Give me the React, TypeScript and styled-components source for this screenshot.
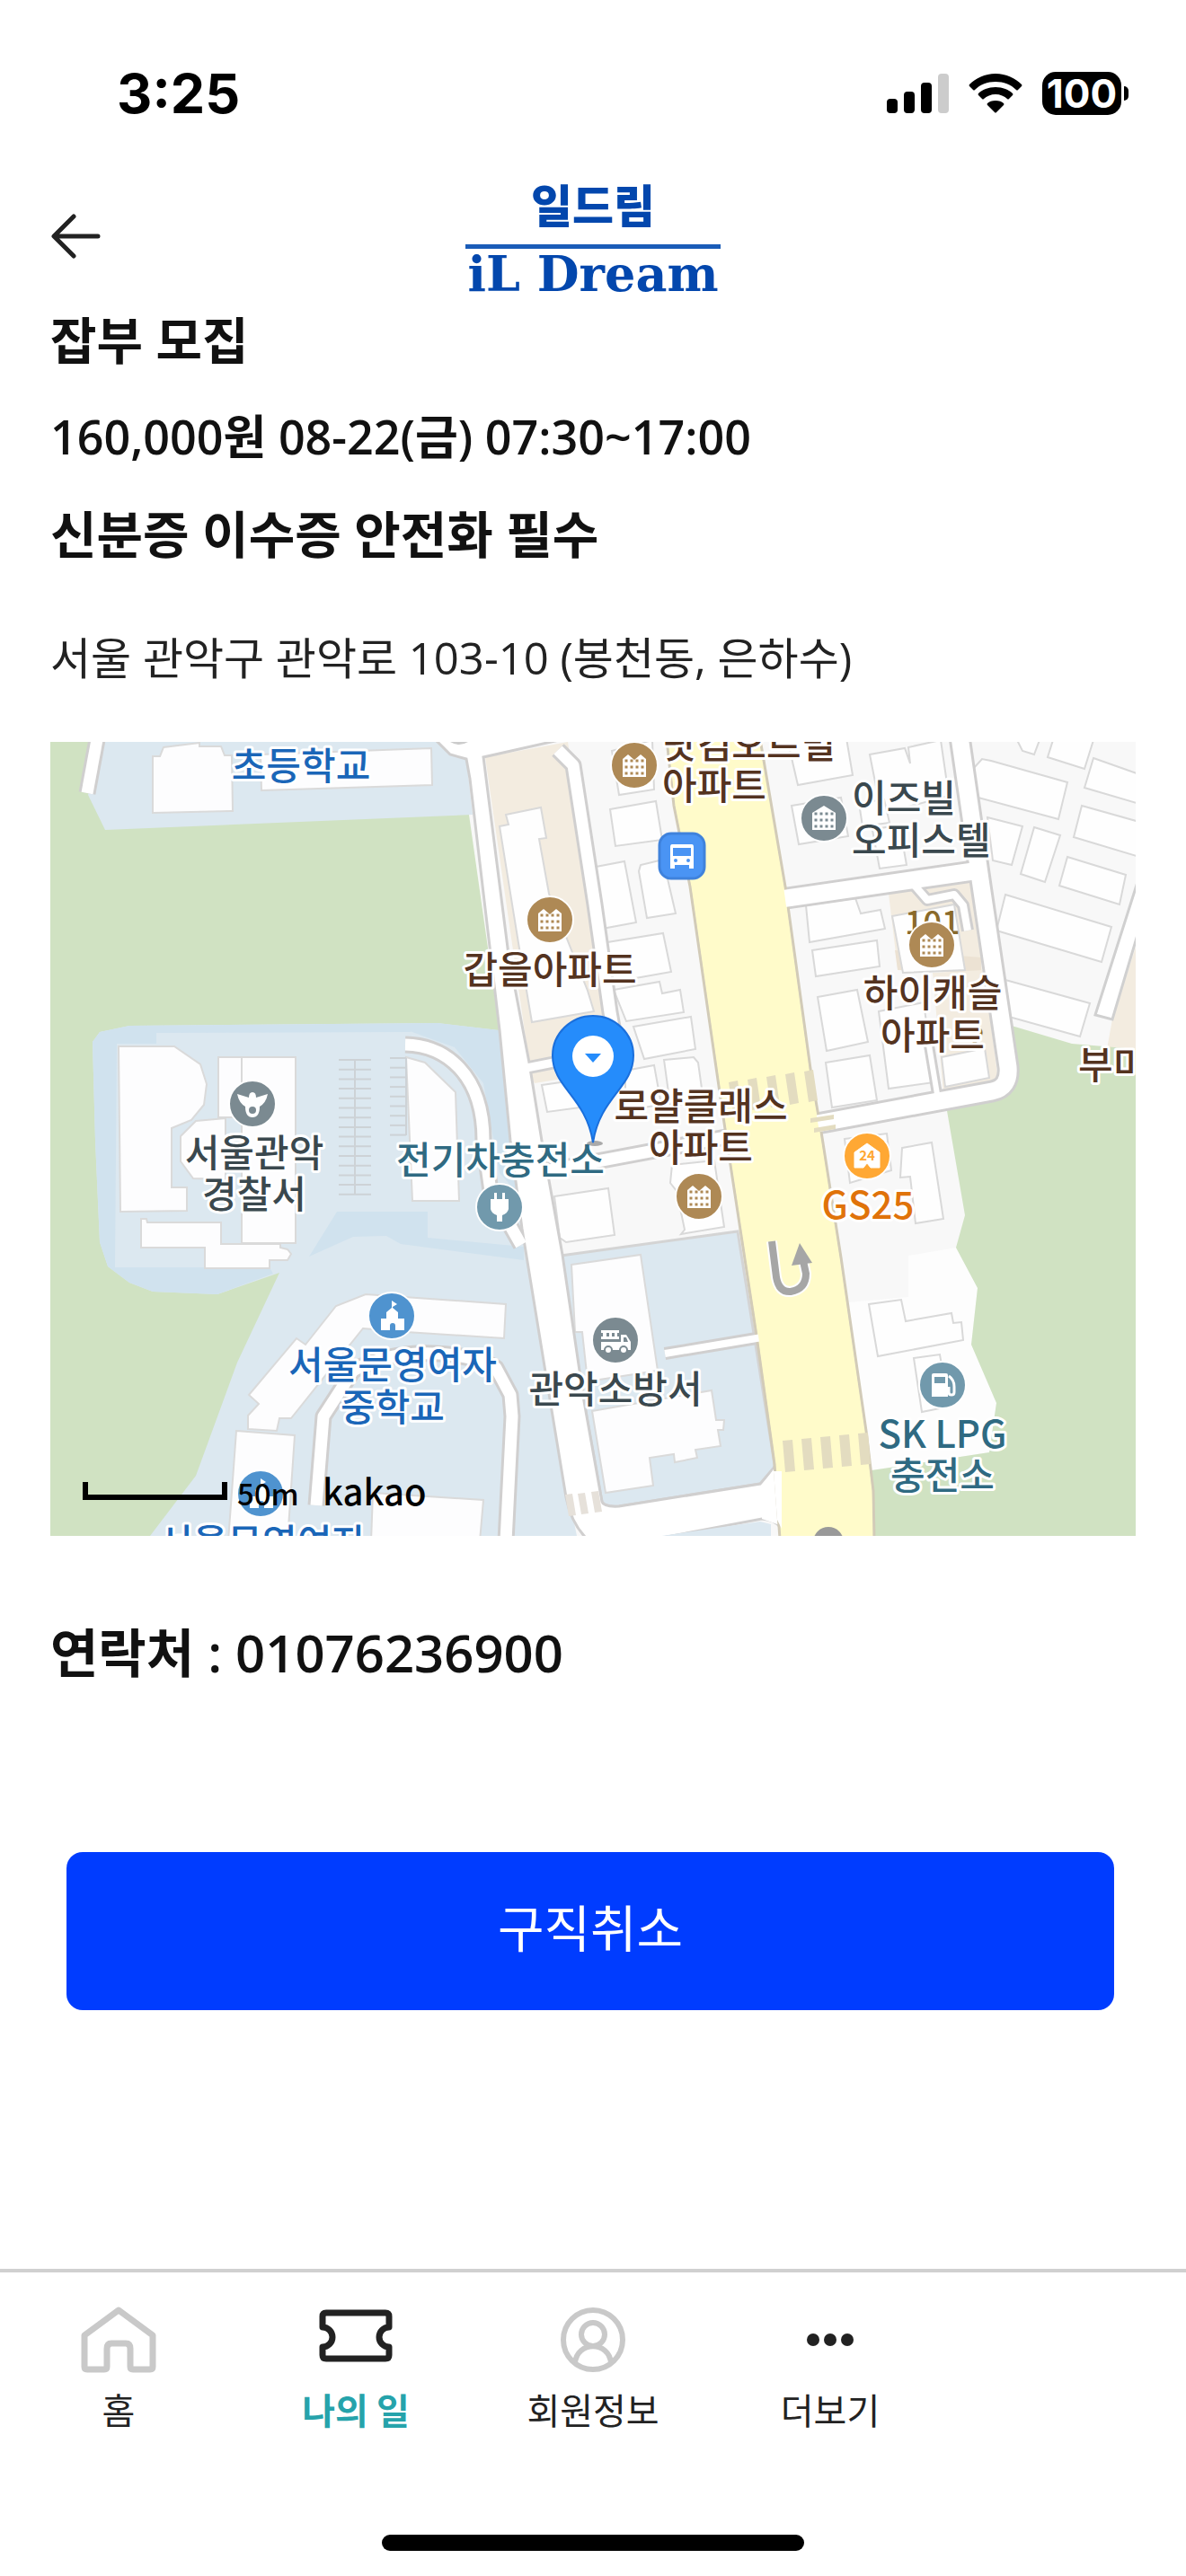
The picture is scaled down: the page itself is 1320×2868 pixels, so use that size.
import React from 'react';
import styled, { createGlobalStyle } from 'styled-components';

const GlobalStyle = createGlobalStyle`
  *, *::before, *::after { box-sizing: border-box; }
  body {
    margin: 0;
    background: #fff;
    color: #111;
    font-family: "Open Sans", "Noto Sans CJK KR", sans-serif;
  }
`;

const Page = styled.div`
  min-height: 100vh;
  display: flex;
  flex-direction: column;
  background: #fff;
`;

/* ---------- status bar ---------- */

const StatusBar = styled.div`
  display: flex;
  align-items: center;
  justify-content: space-between;
  height: 192px;
  padding: 16px 64px 0 130px;
`;

const Clock = styled.time`
  font: 700 61px/72px Inter, sans-serif;
  color: #000;
`;

const StatusIcons = styled.div`
  display: flex;
  align-items: center;
  gap: 22px;
`;

const BatteryBox = styled.div`
  display: flex;
  align-items: center;
  gap: 3px;
`;

const BatteryLevel = styled.span`
  display: flex;
  align-items: center;
  justify-content: center;
  width: 88px;
  height: 48px;
  border-radius: 15px;
  background: #000;
  color: #fff;
  font: 700 44px/48px Inter, sans-serif;
`;

const BatteryTip = styled.span`
  width: 5px;
  height: 16px;
  border-radius: 0 6px 6px 0;
  background: #000;
`;

/* ---------- header ---------- */

const Header = styled.header`
  display: grid;
  grid-template-columns: 1fr auto 1fr;
  align-items: center;
  height: 132px;
  padding: 0 56px;
`;

const BackButton = styled.button`
  justify-self: start;
  display: flex;
  padding: 0;
  border: 0;
  background: none;
  cursor: pointer;
`;

const Logo = styled.div`
  display: flex;
  flex-direction: column;
  align-items: center;
  gap: 12px;
  color: #0347ad;
`;

const LogoKorean = styled.span`
  font: 900 50px/68px "Noto Sans CJK KR", sans-serif;
`;

const LogoLatin = styled.span`
  padding: 0 2px;
  border-top: 5px solid #1a5cb8;
  font: 700 54px/56px "DejaVu Serif", serif;
`;

/* ---------- posting ---------- */

const Main = styled.main`
  flex: 1;
  padding: 0 56px;
`;

const Title = styled.h1`
  margin: 0;
  font-size: 56px;
  line-height: 108px;
  font-weight: 700;
`;

const PayLine = styled.p`
  margin: 0;
  font-size: 52px;
  line-height: 108px;
  font-weight: 600;
`;

const Requirement = styled(Title).attrs({ as: 'h2' })``;

const Address = styled.p`
  margin: 30px 0 40px;
  font-size: 49px;
  line-height: 108px;
  color: #222;
`;

const MapBox = styled.figure`
  margin: 0;
  overflow: hidden;

  svg {
    display: block;
    width: 100%;
    height: auto;
  }

  text {
    font-family: "Noto Sans CJK KR", sans-serif;
    font-size: 42px;
    font-weight: 500;
  }
`;

const Contact = styled.p`
  margin: 76px 0 168px;
  font-size: 58px;
  line-height: 108px;
  font-weight: 600;
`;

const CancelButton = styled.button`
  display: block;
  width: calc(100% - 42px);
  height: 176px;
  margin: 0 24px 48px 18px;
  padding: 0 0 12px;
  border: 0;
  border-radius: 18px;
  background: #003cff;
  color: #fff;
  font: 400 56px/80px "Noto Sans CJK KR", sans-serif;
  cursor: pointer;
`;

/* ---------- bottom navigation ---------- */

const TabBar = styled.nav`
  display: grid;
  grid-template-columns: repeat(5, 1fr);
  border-top: 4px solid #d0d0d0;
  padding-top: 38px;
`;

const Tab = styled.a<{ $active?: boolean }>`
  display: flex;
  flex-direction: column;
  align-items: center;
  gap: 8px;
  color: ${(p) => (p.$active ? '#26a3ab' : '#222')};
  font: ${(p) => (p.$active ? 700 : 400)} 40px/60px "Noto Sans CJK KR", sans-serif;
  text-decoration: none;
  white-space: nowrap;

  svg { display: block; }
`;

const HomeIndicator = styled.div`
  width: 470px;
  height: 18px;
  margin: 110px auto 28px;
  border-radius: 9px;
  background: #000;
`;

/* ---------- map drawing ---------- */

const ROADS: { d: string; w: number }[] = [
  { d: 'M53 -8L41 57', w: 13 },
  { d: 'M565 9L582 26L606 181L623 301L632 350', w: 13 },
  { d: 'M530 363L640 341', w: 9 },
  { d: 'M550 478L752 440', w: 13 },
  { d: 'M1012 -6L1036 160L1066 362Q1068 385 1048 389L848 426', w: 19 },
  { d: 'M806 176L1034 143', w: 19 },
  { d: 'M962 160L976 176L1006 170L1016 182L1021 210', w: 8 },
  { d: 'M975 320L988 398', w: 6 },
  { d: 'M395 337C440 338 482 370 482 444L490 500L524 560', w: 13 },
  { d: 'M296 850L304 751L337 700C390 670 470 680 496 697L512 727L514 751L507 890', w: 13 },
  { d: 'M684 681L792 663', w: 8 },
];

const PALE_BUILDINGS = [
  '114,16 122,16 126,6 166,1 166,5 190,5 194,15 202,15 203,77 114,79',
  '234,14 424,7 425,48 235,54',
  '76,339 138,339 167,359 174,381 171,404 157,421 135,430 135,496 152,496 152,522 78,523',
  '187,351 273,351 273,558 213,558 213,418 187,418',
  '145,439 162,422 195,419 195,487 159,486 145,467',
  '101,531 107,531 108,535 190,535 190,559 256,559 256,563 264,565 268,570 264,577 244,577 244,586 172,586 172,563 101,563',
  '396,351 417,357 451,390 455,511 403,511',
  '351,615 507,626 505,664 396,657 348,653 268,753 255,753 252,767 220,765 220,750 232,737 221,727 274,664 284,671 318,628',
  '207,767 272,772 264,890 198,890',
  '359,836 482,844 478,890 357,890',
  '580,582 657,571 676,700 598,712 592,657 584,657',
  '603,745 736,722 741,755 750,755 749,766 743,766 746,784 718,788 720,797 695,802 694,793 667,797 671,828 618,836',
];

const BUILDINGS = [
  '500,94 510,92 507,81 546,73 552,107 544,108 555,169 598,277 605,300 536,312 521,224',
  '625,10 670,-2 672,53 633,59',
  '623,75 674,66 681,109 629,116',
  '602,140 639,133 652,201 614,208',
  '655,144 657,137 682,131 696,191 664,196',
  '614,224 682,213 691,256 623,268',
  '627,276 678,267 681,280 701,276 705,301 641,311',
  '649,317 713,306 718,342 661,353',
  '640,366 672,360 680,404 640,410',
  '683,354 716,351 721,357 727,400 690,405',
  '547,382 582,377 590,407 553,412',
  '561,506 621,497 628,549 574,557 567,552',
  '692,471 739,466 750,540 702,548 706,543 697,500 690,491',
  '820,-4 886,-4 893,37 832,48',
  '912,14 951,7 957,24 955,6 991,-2 1000,60 925,80',
  '825,71 880,62 888,105 833,114',
  '900,68 928,64 934,90 904,94',
  '915,98 945,92 953,137 923,141',
  '841,182 896,174 902,191 924,187 929,208 845,223',
  '848,232 920,221 923,250 852,261',
  '854,284 898,276 910,334 864,344',
  '863,357 912,349 920,399 870,407',
  '922,300 972,290 984,379 933,386',
  '937,194 1006,181 1018,254 949,257',
  '992,351 1040,341 1045,374 996,384',
  '1027,30 1037,19 1047,21 1132,45 1122,86 1029,61',
  '1043,84 1082,94 1070,137 1049,132',
  '1095,95 1124,104 1107,156 1080,147',
  '1076,-2 1101,-2 1095,14 1082,10',
  '1116,-2 1161,-2 1151,30 1110,17',
  '1161,18 1212,36 1212,69 1151,51',
  '1148,71 1212,89 1212,128 1139,106',
  '1132,128 1197,148 1190,181 1123,160',
  '1063,170 1181,206 1170,245 1053,210',
  '1063,265 1157,291 1146,328 1067,306',
  '948,452 981,446 994,531 963,536 957,484 946,485',
  '911,626 947,621 952,645 1003,636 1005,647 1014,646 1016,666 921,684',
  '961,686 990,682 1000,740 970,746',
  '884,442 931,436 936,477 890,491',
];

type LabelData = { x: number; y: number; t: string; c: string; start?: boolean };

const BLUE = '#1a66b8';
const BROWN = '#54331f';
const SLATE = '#3a484e';
const TEAL = '#2f6a82';

const LABELS: LabelData[] = [
  { x: 279, y: 42, t: '초등학교', c: BLUE },
  { x: 681, y: 18, t: '닷컴오르빌', c: BROWN, start: true },
  { x: 681, y: 64, t: '아파트', c: BROWN, start: true },
  { x: 892, y: 78, t: '이즈빌', c: SLATE, start: true },
  { x: 892, y: 125, t: '오피스텔', c: SLATE, start: true },
  { x: 556, y: 269, t: '갑을아파트', c: BROWN },
  { x: 982, y: 295, t: '하이캐슬', c: BROWN },
  { x: 982, y: 342, t: '아파트', c: BROWN },
  { x: 1144, y: 375, t: '부미', c: BROWN, start: true },
  { x: 724, y: 421, t: '로얄클래스', c: BROWN },
  { x: 724, y: 467, t: '아파트', c: BROWN },
  { x: 227, y: 473, t: '서울관악', c: SLATE },
  { x: 227, y: 519, t: '경찰서', c: SLATE },
  { x: 501, y: 481, t: '전기차충전소', c: TEAL },
  { x: 910, y: 531, t: 'GS25', c: '#e0730a' },
  { x: 381, y: 709, t: '서울문영여자', c: BLUE },
  { x: 381, y: 756, t: '중학교', c: BLUE },
  { x: 629, y: 736, t: '관악소방서', c: SLATE },
  { x: 993, y: 786, t: 'SK LPG', c: TEAL },
  { x: 993, y: 832, t: '충전소', c: TEAL },
  { x: 236, y: 907, t: '서울문영여자', c: BLUE },
];

const Spot = ({ x, y, fill, children }: { x: number; y: number; fill: string; children: React.ReactNode }) => (
  <g transform={`translate(${x} ${y})`}>
    <circle r="26" fill={fill} stroke="#fff" strokeWidth="2" />
    {children}
  </g>
);

const windows = [-7, 0, 7].flatMap((y) => [-9, -3, 3, 9].map((x) => [x, y]));

const Apartment = ({ x, y, fill = '#ae8955', single }: { x: number; y: number; fill?: string; single?: boolean }) => (
  <Spot x={x} y={y} fill={fill}>
    <path d={single ? 'M-13 13V-6L0 -14L13 -6V13Z' : 'M-13 13V-7L-7 -12L0 -6L7 -12L13 -7V13Z'} fill="#fff" />
    {windows.map(([wx, wy]) => (
      <rect key={`${wx},${wy}`} x={wx - 1.5} y={wy + 0.5} width="3" height="3" fill={fill} />
    ))}
  </Spot>
);

const School = ({ x, y }: { x: number; y: number }) => (
  <Spot x={x} y={y} fill="#4f93cf">
    <path d="M-12 16V3H-6V-4L0 -9V-17L6 -13L1 -10V-9L7 -4V3H14V16H4V11A3 3 0 0 0 -2 11V16Z" fill="#fff" />
  </Spot>
);

const LocationMap = () => (
  <svg viewBox="0 0 1208 884" role="img" aria-label="근무지 지도">
    <rect width="1208" height="884" fill="#f8f8f8" />
    <path d="M0 0H70L463 60L500 321L560 884H0Z" fill="#d0e2c2" />
    <path d="M61 0L42 59L61 98L470 81L461 0Z" fill="#dce8f0" />
    <path d="M47 334L55 323L88 316L431 313L499 321L512 444L525 542L558 744L586 884H111L162 817L208 691L255 591L186 615L114 612L88 602L64 584L55 557L50 444Z" fill="#dce8f0" />
    <path d="M47 334L55 323L88 316L431 313L400 323L118 324V336H74L72 585H244L248 592L186 615L114 612L88 602L64 584L55 557L50 444ZM400 322L431 313L499 321L512 444L518 500L500 480L482 380L450 340ZM319 523H420V552L527 562V577L390 559L374 550L337 551L288 573Z" fill="#d0e2ee" />

    <path d="M484 17L576 0L606 194L618 301L628 345L533 357Z" fill="#f3ece0" />
    <path d="M533 369L600 357V370L539 380Z" fill="#f3ece0" />
    <path d="M933 169L1027 156L1037 254L943 252Z" fill="#f3ece0" />
    <path d="M940 232L1036 240V257L943 254Z" fill="#ece2d3" />
    <path d="M982 257L1039 254L1055 377L994 391Z" fill="#f3ece0" />
    <path d="M1212 216L1182 309L1176 342L1212 344Z" fill="#f3ece0" />

    <path d="M955 572L1008 563L1032 608L1025 671L1053 736L1045 791L914 811L888 624L955 618Z" fill="#fdfdfd" />
    <path d="M1070 316L1137 336L1208 342V884H917L914 811L1045 791L1053 736L1025 671L1032 608L1008 563L1018 527L997 405L1060 390Z" fill="#d0e2c2" />

    <path d="M568 572L765 545L806 804Q806 822 790 826L633 851Q618 852 614 846L594 734Z" fill="#dce8f0" stroke="#d4d4d4" strokeWidth="3" />

    <g fill="#fdfdfe" stroke="#dadada" strokeWidth="2">
      {PALE_BUILDINGS.map((p) => <polygon key={p} points={p} />)}
      <path d="M213 351V418" />
    </g>
    <g fill="#fefefe" stroke="#d9d9d9" strokeWidth="2">
      {BUILDINGS.map((p) => <polygon key={p} points={p} />)}
    </g>

    <g stroke="#cdd2d6" strokeWidth="2">
      <path d="M339 354V504M396 352V438" />
      {Array.from({ length: 15 }, (_, i) => (
        <path key={i} d={`M321 ${354 + i * 10.7}H357`} />
      ))}
      {Array.from({ length: 9 }, (_, i) => (
        <path key={i} d={`M378 ${352 + i * 10.7}H396`} />
      ))}
    </g>

    <path d="M1212 150L1163 304L1182 309L1212 208" fill="#fff" stroke="#d0d0d0" strokeWidth="3" />

    <g fill="none" stroke="#d0cfcf" strokeLinejoin="round">
      {ROADS.map((r) => <path key={r.d} d={r.d} strokeWidth={r.w + 6} />)}
    </g>
    <path d="M427 -4L445 14L463 19L467 41L500 321L512 444L525 542L558 744L574 841Q580 872 600 890H660L792 865Q806 866 812 874V800L790 826L633 851Q616 852 614 846L594 734L570 571L547 444L533 357L510 237L482 17L575 -4Z" fill="#fff" stroke="#d0cfcf" strokeWidth="3" />
    <path d="M792 828L812 800V872L792 865Z" fill="#fff" />
    <path d="M667 886L790 868L802 871V886Z" fill="#dce8f0" />
    <path d="M445 0Q455 6 465 0Z" fill="#ccc" />

    <path d="M686 -3L694 71L712 161L747 404L757 471L786 661L806 804L812 887H917L916 834L908 767L880 574L858 434L847 371L818 161L790 -3Z" fill="#fffbca" stroke="#d2cbb8" strokeWidth="3" />
    <g fill="none" stroke="#fff" strokeLinejoin="round">
      {ROADS.map((r) => <path key={r.d} d={r.d} strokeWidth={r.w} />)}
    </g>
    <path d="M688 0L696 71L714 161L749 404L759 471L788 661L808 804L814 884H915L914 834L906 767L878 574L856 434L845 371L816 161L788 0Z" fill="#fffbca" />
    <path d="M805 812L809 866L814 876V812Z" fill="#fff" />

    <g fill="#e3dcc0">
      {[0, 1, 2, 3, 4].map((i) => (
        <path key={i} d={`M${755 + i * 21} ${379 - i * 3}l10 -2l5 34l-10 2Z`} />
      ))}
      {[0, 1, 2, 3, 4].map((i) => (
        <path key={i} d={`M${815 + i * 21} ${778 - i * 2}l11 -1l3 35l-11 1Z`} />
      ))}
      <path d="M846 419l26 -4v5l-26 4ZM850 430l24 -4v5l-24 4Z" />
    </g>
    <g fill="#e6e1da">
      <path d="M573 838l8 -1l4 24l-8 1ZM587 837l8 -1l4 23l-8 1ZM602 835l8 -1l4 23l-8 1Z" />
    </g>

    <path d="M803 556L808 596Q811 613 824 612Q841 609 841 592L838 578" fill="none" stroke="#fff" strokeWidth="12" />
    <path d="M803 556L808 596Q811 613 824 612Q841 609 841 592L838 578" fill="none" stroke="#a6a6a6" strokeWidth="8" />
    <path d="M834 558L848 580L825 583Z" fill="#a6a6a6" />
    <circle cx="866" cy="891" r="17" fill="#999" />

    <text x="951" y="214" fill="#8a6a2a" style={{ fontSize: 36 }}>101</text>
    <text x="1022" y="340" fill="#8a6a2a" style={{ fontSize: 32 }}>2</text>

    {LABELS.map((l) => (
      <text
        key={`${l.x},${l.y}`}
        x={l.x}
        y={l.y}
        fill={l.c}
        textAnchor={l.start ? 'start' : 'middle'}
        stroke="#fff"
        strokeWidth="6"
        strokeLinejoin="round"
        paintOrder="stroke"
      >
        {l.t}
      </text>
    ))}

    <Apartment x={650} y={26} />
    <Apartment x={556} y={198} />
    <Apartment x={981} y={226} />
    <Apartment x={722} y={506} />
    <Apartment x={861} y={85} fill="#7b8a91" single />
    <School x={380} y={639} />
    <School x={234} y={837} />

    <g transform="translate(703 127)">
      <rect x="-25" y="-25" width="50" height="50" rx="13" fill="#4a94f4" stroke="#3f82dc" strokeWidth="3" />
      <path d="M-11 -13H11Q13 -13 13 -10V14H8V10H-8V14H-13V-10Q-13 -13 -11 -13Z" fill="#fff" />
      <path d="M-10 -9H10V0H-10Z" fill="#4a94f4" />
      <circle cx="-7" cy="5" r="2" fill="#4a94f4" />
      <circle cx="7" cy="5" r="2" fill="#4a94f4" />
    </g>

    <Spot x={225} y={403} fill="#7b8a91">
      <path d="M-17 -11L-4 -7Q-4 -13 0 -13Q4 -13 4 -7L17 -11Q15 -1 8 3Q8 15 0 15Q-8 15 -8 3Q-15 -1 -17 -11Z" fill="#fff" />
      <circle cy="7" r="4" fill="#7b8a91" />
    </Spot>

    <Spot x={500} y={518} fill="#7199ac">
      <path d="M-6 -16H-3V-9H3V-16H6V-9H10V2Q9 7 3 9V16H-3V9Q-9 7 -10 2V-9H-6Z" fill="#fff" />
    </Spot>

    <Spot x={629} y={666} fill="#7b8a91">
      <path d="M-16 -11H4V-8H2V-4H4V-1H-16V-4H-14V-8H-16ZM-16 2H6V-6H12L17 2V11H-16Z" fill="#fff" />
      <path d="M-10 -8h3v4h-3ZM-4 -8h3v4h-3ZM9 -3h3l2 5H9Z" fill="#7b8a91" />
      <circle cx="-8" cy="11" r="4" fill="#fff" stroke="#7b8a91" strokeWidth="2" />
      <circle cx="9" cy="11" r="4" fill="#fff" stroke="#7b8a91" strokeWidth="2" />
    </Spot>

    <Spot x={909} y={461} fill="#ffa834">
      <path d="M-14 13V-4L0 -14L14 -4V13H4L0 8L-4 13Z" fill="#fff" stroke="#fff" strokeLinejoin="round" />
      <text y="5" textAnchor="middle" fill="#ffa834" style={{ fontSize: 15, fontWeight: 700 }}>24</text>
    </Spot>

    <Spot x={993} y={716} fill="#7199ac">
      <path d="M-12 -11Q-12 -13 -10 -13H4Q6 -13 6 -11V13H-12Z" fill="#fff" />
      <path d="M-9 -9H3V-2H-9Z" fill="#7199ac" />
      <path d="M7 -10Q13 -6 13 2V8Q13 11 10 11Q7 11 7 8V2" fill="none" stroke="#fff" strokeWidth="3" />
    </Spot>

    <ellipse cx="606" cy="447" rx="9" ry="3" fill="#777" opacity="0.6" />
    <path d="M604 305C579 305 559 325 559 349C559 385 596 395 604 446C612 395 649 385 649 349C649 325 629 305 604 305Z" fill="#258cfb" stroke="#1a6fdc" strokeWidth="2" />
    <circle cx="604" cy="350" r="23" fill="#fff" />
    <path d="M595 347H613L604 357Z" fill="#258cfb" />

    <path d="M39 824V841H194V824" fill="none" stroke="#000" strokeWidth="6" />
    <text x="208" y="850" fill="#000" style={{ fontSize: 33 }}>50m</text>
    <text x="303" y="850" fill="#000" style={{ fontSize: 40 }}>kakao</text>
  </svg>
);

/* ---------- screen ---------- */

export default function App() {
  return (
    <Page>
      <GlobalStyle />
      <StatusBar>
        <Clock>3:25</Clock>
        <StatusIcons>
          <svg width="69" height="44" viewBox="0 0 69 44" aria-hidden="true">
            <rect x="0" y="28" width="12" height="16" rx="4" />
            <rect x="19" y="20" width="12" height="24" rx="4" />
            <rect x="38" y="10" width="12" height="34" rx="4" />
            <rect x="57" y="0" width="12" height="44" rx="4" fill="#ccc" />
          </svg>
          <svg width="60" height="44" viewBox="0 0 60 44" aria-hidden="true">
            <path d="M30 0C18 0 8 5 1 12Q0 13 1 14L5 18Q6 19 7 18C13 12 21 9 30 9S47 12 53 18Q54 19 55 18L59 14Q60 13 59 12C52 5 42 0 30 0Z" />
            <path d="M30 15C22 15 15 18 11 22Q10 23 11 24L15 28Q16 29 17 28C20 25 25 23 30 23S40 25 43 28Q44 29 45 28L49 24Q50 23 49 22C45 18 38 15 30 15Z" />
            <path d="M30 30C26 30 23 31 21 33Q20 34 21 35L29 43Q30 44 31 43L39 35Q40 34 39 33C37 31 34 30 30 30Z" />
          </svg>
          <BatteryBox>
            <BatteryLevel>100</BatteryLevel>
            <BatteryTip />
          </BatteryBox>
        </StatusIcons>
      </StatusBar>

      <Header>
        <BackButton type="button" aria-label="뒤로">
          <svg width="56" height="52" viewBox="0 0 56 52" fill="none" stroke="#222" strokeWidth="5" strokeLinecap="round" strokeLinejoin="round">
            <path d="M53 26H5M26 4L4 26L26 48" />
          </svg>
        </BackButton>
        <Logo>
          <LogoKorean>일드림</LogoKorean>
          <LogoLatin>iL Dream</LogoLatin>
        </Logo>
      </Header>

      <Main>
        <Title>잡부 모집</Title>
        <PayLine>160,000원 08-22(금) 07:30~17:00</PayLine>
        <Requirement>신분증 이수증 안전화 필수</Requirement>
        <Address>서울 관악구 관악로 103-10 (봉천동, 은하수)</Address>
        <MapBox>
          <LocationMap />
        </MapBox>
        <Contact>연락처 : 01076236900</Contact>
        <CancelButton type="button">구직취소</CancelButton>
      </Main>

      <TabBar>
        <Tab href="#home">
          <svg width="84" height="76" viewBox="0 0 84 76" fill="none" stroke="#c9c9c9" strokeWidth="7" strokeLinejoin="round">
            <path d="M4 32L42 4L80 32V67Q80 70 77 70H58Q55 70 55 67V47Q55 41 50 41H34Q29 41 29 47V67Q29 70 26 70H7Q4 70 4 67Z" />
          </svg>
          홈
        </Tab>
        <Tab href="#work" $active>
          <svg width="84" height="76" viewBox="0 0 84 76" fill="none" stroke="#222" strokeWidth="7" strokeLinejoin="round">
            <path d="M9 7H75Q79 7 79 11V23A11 11 0 0 0 79 45V54Q79 58 75 58H9Q5 58 5 54V45A11 11 0 0 0 5 23V11Q5 7 9 7Z" />
          </svg>
          나의 일
        </Tab>
        <Tab href="#profile">
          <svg width="84" height="76" viewBox="0 0 84 76" fill="none" stroke="#c9c9c9" strokeWidth="6">
            <circle cx="42" cy="37" r="33" />
            <circle cx="42" cy="31" r="13" />
            <path d="M22 63C24 38 60 38 62 63" />
          </svg>
          회원정보
        </Tab>
        <Tab href="#more">
          <svg width="84" height="76" viewBox="0 0 84 76" fill="#222">
            <circle cx="23" cy="37" r="7" />
            <circle cx="42" cy="37" r="7" />
            <circle cx="61" cy="37" r="7" />
          </svg>
          더보기
        </Tab>
      </TabBar>
      <HomeIndicator />
    </Page>
  );
}
